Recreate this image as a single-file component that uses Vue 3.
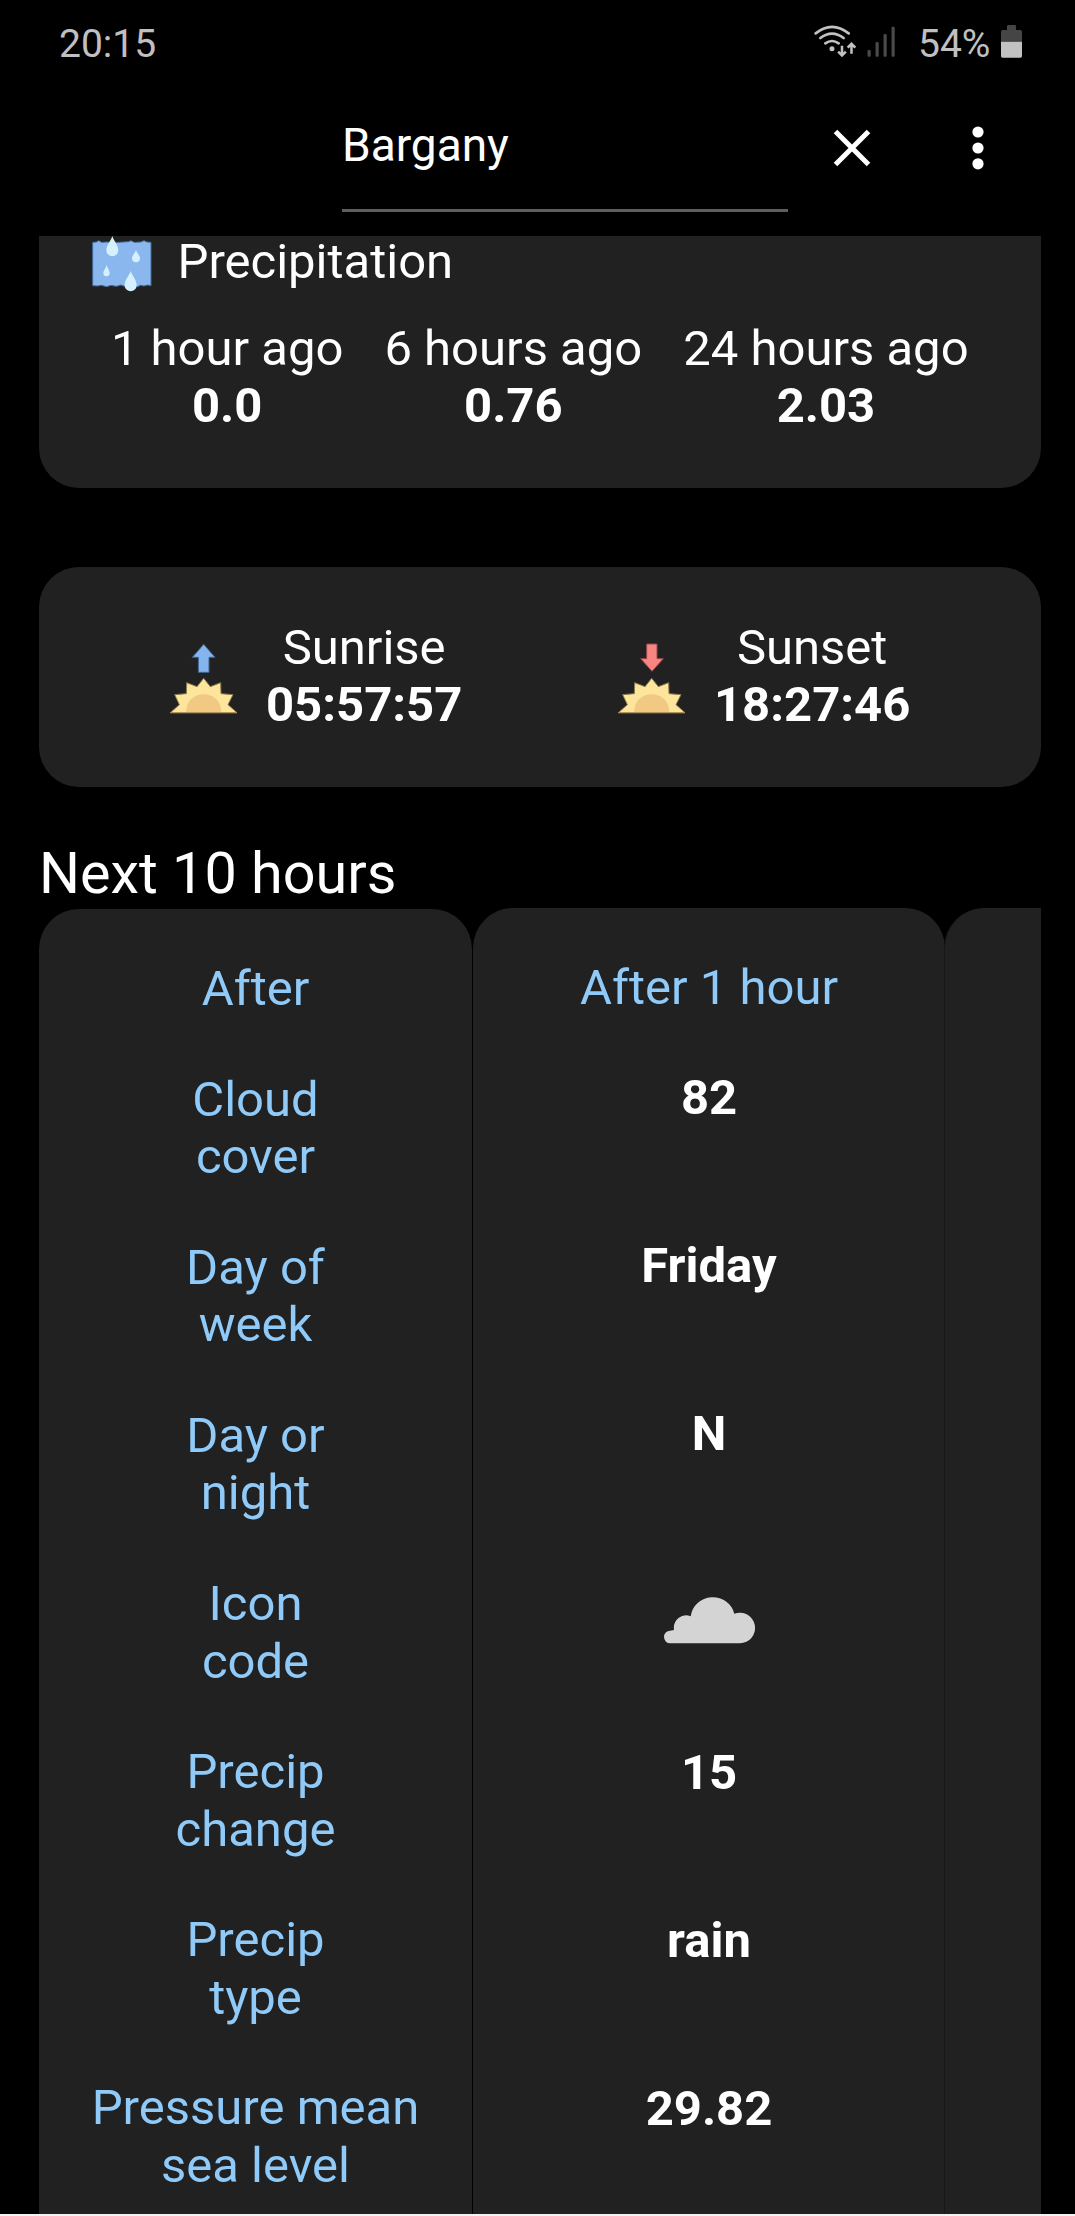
<script setup>
const precipitation = [
  { label: '1 hour ago', value: '0.0' },
  { label: '6 hours ago', value: '0.76' },
  { label: '24 hours ago', value: '2.03' },
]

const sun = [
  { label: 'Sunrise', value: '05:57:57', rising: true },
  { label: 'Sunset', value: '18:27:46', rising: false },
]

const forecast = [
  { label: ['Cloud', 'cover'], value: '82' },
  { label: ['Day of', 'week'], value: 'Friday' },
  { label: ['Day or', 'night'], value: 'N' },
  { label: ['Icon', 'code'], icon: true },
  { label: ['Precip', 'change'], value: '15' },
  { label: ['Precip', 'type'], value: 'rain' },
  { label: ['Pressure mean', 'sea level'], value: '29.82' },
]
</script>

<template>
  <div class="screen">
    <header class="status">
      <span class="clock">20:15</span>
      <svg class="signals" viewBox="100 70 250 110">
        <g fill="none" stroke="#c2c2c2" stroke-width="8" stroke-linecap="round">
          <path d="M108 101Q157 62 207 101" />
          <path d="M122 115Q157 88 192 115" />
          <path d="M137 131Q157 117 177 131" />
        </g>
        <circle cx="157" cy="147" r="7.5" fill="#c2c2c2" />
        <g fill="none" stroke="#c2c2c2" stroke-width="7.5">
          <path d="M187 138V167M175.500 156L187 167.500L198.500 156" />
          <path d="M215.500 162V133M204 144L215.500 132.500L227 144" />
        </g>
        <g stroke="#4a4a4a" stroke-width="9.500" stroke-linecap="round">
          <path d="M268.500 155V167M292.500 131V167M316.500 107V167M340.500 85V167" />
        </g>
      </svg>
      <span class="percent">54%</span>
      <svg class="battery" viewBox="663 76 63 98">
        <path d="M681 91V80Q681 76 685 76H704Q708 76 708 80V91H721Q726 91 726 96V126H663V96Q663 91 668 91Z" fill="#454545" />
        <path d="M663 126H726V169Q726 174 721 174H668Q663 174 663 169Z" fill="#c2c2c2" />
      </svg>
    </header>

    <div class="toolbar">
      <div class="search">Bargany</div>
      <svg class="close" viewBox="0 0 38 38">
        <path d="M2.500 2.500L35.500 35.500M35.500 2.500L2.500 35.500" stroke="#fff" stroke-width="5" />
      </svg>
      <svg class="more" viewBox="0 0 12 44" fill="#fff">
        <circle cx="6" cy="6" r="5.600" />
        <circle cx="6" cy="22" r="5.600" />
        <circle cx="6" cy="37.800" r="5.600" />
      </svg>
    </div>

    <main class="content">
      <section class="card rain-card">
        <div class="rain-title">
          <svg class="rain-icon" viewBox="45 33 195 170">
            <path
              d="M53 52L64 51L71 47L80 52L95 51L112 52L130 52L145 51L160 50L168 47L178 52L197 51L207 47L216 51L228 52V182L218 180L207 183L196 181L188 185L167 184L148 184L138 180L124 184L108 181L95 185L79 181L68 183L53 182Z"
              fill="#8ab7ee" stroke="#416a9b" stroke-width="3"
            />
            <g fill="#d5f0ff">
              <path d="M112 33C116 47 130 60 130 76A18 18 0 0 1 94 76C94 60 108 47 112 33Z" />
              <path d="M167 138C171 151 185 164 185 181A18 18 0 0 1 149 181C149 164 163 151 167 138Z" />
              <path d="M183 75C185 84 195 91 195 100A12 12 0 0 1 171 100C171 91 181 84 183 75Z" />
              <path d="M95 120C97 129 104 136 104 144A9.500 9.500 0 0 1 85 144C85 136 93 129 95 120Z" />
            </g>
          </svg>
          <span>Precipitation</span>
        </div>
        <div class="rain-row">
          <div v-for="p in precipitation" :key="p.label" class="stat">
            <div>{{ p.label }}</div>
            <b>{{ p.value }}</b>
          </div>
        </div>
      </section>

      <section class="card sun-card">
        <div v-for="s in sun" :key="s.label" class="sun-item">
          <svg class="sun-icon" viewBox="85 245 215 220">
            <path v-if="s.rising" d="M192 252L226 291H208V336H176V291H158Z" fill="#86b4ee" stroke="#3c6490" stroke-width="3" />
            <path v-else d="M177 251H208V295H227L193 333L159 295H177Z" fill="#f98583" stroke="#98484a" stroke-width="3" />
            <path
              d="M92 457L119 433L105 403L140 400L141 367L172 379L192 354L212 379L243 367L244 400L280 403L265 433L292 457Z"
              fill="#fde69b" stroke="#8a7a49" stroke-width="3"
            />
            <path d="M139 456Q139 432 154 417Q170 402 192 402Q214 402 230 417Q245 432 245 456Z" fill="#f1c982" />
            <path d="M92 457H292" stroke="#b0935c" stroke-width="4" />
          </svg>
          <div class="stat">
            <div>{{ s.label }}</div>
            <b>{{ s.value }}</b>
          </div>
        </div>
      </section>

      <h2>Next 10 hours</h2>

      <section class="table">
        <div class="column names">
          <div class="head">After</div>
          <div v-for="(row, i) in forecast" :key="i" class="cell">
            <div v-for="line in row.label" :key="line">{{ line }}</div>
          </div>
        </div>
        <div class="column values">
          <div class="head">After 1 hour</div>
          <div v-for="(row, i) in forecast" :key="i" class="cell" :class="{ 'icon-cell': row.icon }">
            <svg v-if="row.icon" class="cloud" viewBox="71 82 274 139">
              <path
                d="M89 221A18 19 0 0 1 89 183L101 181A36.500 38 0 0 1 151 140A67 67 0 0 1 282 132A46 46 0 1 1 299 221Z"
                fill="#d4d4d4"
              />
            </svg>
            <b v-else>{{ row.value }}</b>
          </div>
        </div>
        <div class="column next"></div>
      </section>
    </main>
    <div class="strip"></div>
  </div>
</template>

<style>
body {
  margin: 0;
  background: #000;
}
</style>

<style scoped>
.screen {
  display: flex;
  flex-direction: column;
  width: 1075px;
  height: 2216px;
  overflow: hidden;
  background: #000;
  color: #fff;
  font-family: Roboto, sans-serif;
  font-size: 49px;
  line-height: 57.4px;
}
svg {
  display: block;
  flex: none;
}
b {
  display: block;
  font-weight: 700;
}
.status {
  display: flex;
  flex: none;
  height: 82px;
  box-sizing: border-box;
  padding: 21px 53px 0 59px;
  font-size: 39px;
  line-height: 46px;
  color: #c0c0c0;
}
.clock {
  margin-right: auto;
}
.signals {
  width: 83.3px;
  height: 36.7px;
  margin: 2.3px 21.500px 0 0;
}
.percent {
  width: 83px;
}
.battery {
  width: 21px;
  height: 32.700px;
  margin-top: 4.300px;
}
.toolbar {
  display: flex;
  flex: none;
  height: 154px;
  padding-left: 342px;
}
.search {
  box-sizing: border-box;
  width: 446px;
  height: 129.500px;
  padding-top: 36px;
  border-bottom: 3px solid #5e5e5e;
  font-size: 46px;
  line-height: 54px;
}
.close {
  width: 38px;
  height: 38px;
  margin: 46.500px 0 0 44.500px;
}
.more {
  width: 12px;
  height: 44px;
  margin: 43.600px 0 0 101px;
}
.content {
  flex: none;
  height: 1978px;
  padding: 0 34px 0 39px;
  overflow: hidden;
}
.card {
  box-sizing: border-box;
  width: 1001.500px;
  border-radius: 40px;
  background: #212121;
}
.rain-card {
  height: 292px;
  margin-top: -40px;
  padding-top: 40px;
}
.rain-title {
  display: flex;
  height: 84px;
  padding-left: 51px;
  gap: 22.500px;
  line-height: 52px;
}
.rain-icon {
  width: 65px;
  height: 56.700px;
}
.rain-row {
  display: flex;
  justify-content: center;
  gap: 41px;
}
.stat {
  text-align: center;
}
.sun-card {
  display: flex;
  height: 220px;
  margin-top: 79px;
  padding: 51.500px 0 0 129.300px;
}
.sun-item {
  display: flex;
  flex: none;
  width: 448px;
}
.sun-icon {
  width: 71.700px;
  height: 73.300px;
  margin: 23.200px 26px 0 0;
}
h2 {
  height: 68.200px;
  margin: 52.800px 0 0;
  font-size: 57.500px;
  font-weight: 400;
  line-height: 67px;
}
.table {
  display: flex;
  width: 1001.500px;
  height: 1306px;
  overflow: hidden;
}
.column {
  flex: none;
  box-sizing: border-box;
  border-radius: 40px 40px 0 0;
  background: #212121;
  text-align: center;
}
.names {
  width: 433px;
  margin: 1px 1px 0 0;
  padding-top: 51.200px;
  color: #90caf9;
}
.values {
  width: 472px;
  padding-top: 51.500px;
}
.next {
  width: 140px;
  box-shadow: -1px 0 0 #181818;
}
.head {
  height: 110.700px;
  color: #90caf9;
}
.cell {
  height: 168.100px;
}
.values .head {
  height: 110px;
}
.values .cell {
  height: 168px;
}
.values .icon-cell {
  height: 171px;
}
.cloud {
  width: 91.300px;
  height: 46.300px;
  margin: 0 auto;
  padding: 24px 0 0 1px;
}
.strip {
  flex: none;
  height: 2px;
  background: #f2f2f2;
}
</style>
